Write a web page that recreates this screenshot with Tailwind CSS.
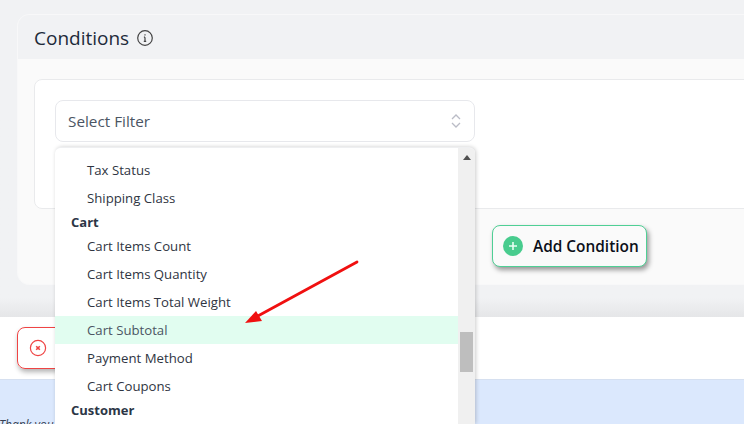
<!DOCTYPE html>
<html lang="en">
<head>
    <meta charset="UTF-8">
    <title>Conditions</title>
    <script src="https://cdn.jsdelivr.net/npm/@tailwindcss/browser@4"></script>
</head>
<body class="bg-[#f1f2f4] overflow-hidden font-['Open_Sans','Noto_Sans',sans-serif]">
<div class="relative w-[744px] h-[424px] overflow-hidden flex flex-col">
    <!-- Conditions card -->
    <div class="h-[317px] shrink-0 pt-[14px] pl-[17px] bg-gradient-to-b from-[#f1f2f4] from-[94%] to-[#e5e6e8]">
        <div class="w-[800px] h-[271px] bg-[#fafafa] border border-[#f8f8f9] rounded-tl-xl rounded-bl-xl overflow-hidden">
            <div class="h-[44px] bg-[#f1f2f4] flex items-center pl-4 pt-[2px] gap-[7px]">
                <span class="text-[19px] text-[#1d2b3a]">Conditions</span>
                <svg width="18" height="18" viewBox="0 0 18 18" fill="none" stroke="#444" stroke-width="1.2"><circle cx="9" cy="9" r="7.3"/><path d="M9 8.2v4M7.8 12.4h2.4M7.9 8.2H9M9 5.2v1.4"/></svg>
            </div>
            <div class="pt-[20px] pl-4">
                <div class="w-[800px] h-[130px] bg-white border border-[#e9eaec] rounded-lg pt-[20px] pl-[20px]">
                    <div class="w-[420px] h-[42px] border border-[#e7e8ec] rounded-lg flex items-center justify-between pl-3 pr-[12px] text-[15.3px] text-[#4b5563]">
                        <span>Select Filter</span>
                        <svg width="12" height="16" viewBox="0 0 12 16" fill="none" stroke="#babcc6" stroke-width="1.3"><path d="M2 6l4-4 4 4M2 10l4 4 4-4"/></svg>
                    </div>
                </div>
            </div>
        </div>
    </div>
    <!-- Footer bar -->
    <div class="h-[62px] shrink-0 bg-white pl-[17px] pt-[10px]">
        <div class="w-[100px] h-[42px] border border-[#ef4444] rounded-lg shadow-[1px_3px_5px_rgba(0,0,0,0.3)] flex items-center pl-[11px]">
            <svg width="18" height="18" viewBox="0 0 18 18" fill="none" stroke="#ef4444" stroke-width="1.2"><circle cx="9" cy="9" r="7.6"/><path stroke-width="1.6" d="M7.2 7.2l3.6 3.6M10.8 7.2l-3.6 3.6"/></svg>
        </div>
    </div>
    <div class="flex-1 bg-[#dbe8fd] border-t border-[#d6e0f0] relative">
        <span class="absolute -left-[1px] top-[36px] text-[12px] italic text-[#374151]">Thank you</span>
    </div>

    <!-- Add Condition button -->
    <button class="absolute left-[492px] top-[225px] w-[155px] h-[42px] flex items-center gap-[10px] pl-[10px] bg-[#fafafa] border border-[#4fcf95] rounded-lg shadow-[2px_3px_5px_rgba(0,0,0,0.4)]">
        <span class="w-5 h-5 rounded-full bg-[#48cc8e] flex items-center justify-center">
            <svg width="10" height="10" viewBox="0 0 10 10" stroke="#e8fff3" stroke-width="1.6"><path d="M5 1v8M1 5h8"/></svg>
        </span>
        <span class="pt-[2px] text-[15.4px] font-semibold text-[#0b0f19]">Add Condition</span>
    </button>

    <!-- Dropdown -->
    <div class="absolute left-[55px] top-[147px] w-[420px] h-[277px] bg-white border-t border-[#eeeff1] rounded-t-md shadow-[1px_0_4px_rgba(0,0,0,0.2)] flex overflow-hidden">
        <ul class="w-[403px] pt-[8px] text-[13.2px] text-[#2f3542] leading-[28px]">
            <li class="pl-8">Tax Status</li>
            <li class="pl-8">Shipping Class</li>
            <li class="pl-4 font-bold text-[13px] leading-[20px] text-[#2c3646]">Cart</li>
            <li class="pl-8">Cart Items Count</li>
            <li class="pl-8">Cart Items Quantity</li>
            <li class="pl-8">Cart Items Total Weight</li>
            <li class="pl-8 bg-[#e1fdf0] text-[#4b5563]">Cart Subtotal</li>
            <li class="pl-8">Payment Method</li>
            <li class="pl-8">Cart Coupons</li>
            <li class="pl-4 font-bold text-[13px] leading-[20px] text-[#2c3646]">Customer</li>
        </ul>
        <div class="w-[17px] bg-[#f0f0f0] relative">
            <div class="absolute left-[5px] top-[7px] w-0 h-0 border-x-[4px] border-x-transparent border-b-[5px] border-b-[#505050]"></div>
            <div class="absolute left-[2px] top-[184px] w-[13px] h-[40px] bg-[#bebebe]"></div>
        </div>
    </div>

    <!-- Red annotation arrow -->
    <svg class="absolute left-0 top-0 pointer-events-none" width="744" height="424" viewBox="0 0 744 424" fill="none">
        <path d="M357 262L256 317" stroke="#f01010" stroke-width="2.8" stroke-linecap="round"/>
        <path d="M245 323L256 311L262 321Z" fill="#f01010"/>
    </svg>
</div>
</body>
</html>
